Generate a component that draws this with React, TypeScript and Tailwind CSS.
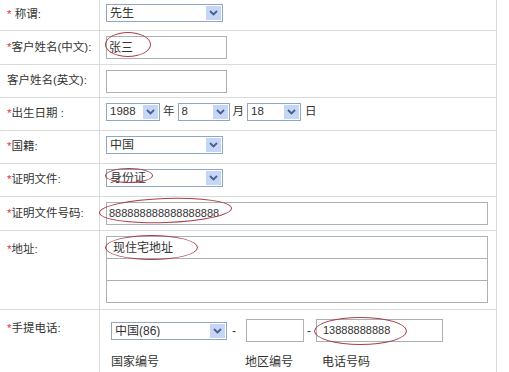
import React from "react";

const font = "font-['Liberation_Sans','Noto_Sans_CJK_SC',sans-serif]";

function Chevron() {
  return (
    <svg width="9" height="6" viewBox="0 0 9 6">
      <path d="M1 1 L4.5 4.5 L8 1" fill="none" stroke="#4a5f8c" strokeWidth="1.8" />
    </svg>
  );
}

function Select({ className, text }: { className: string; text: string }) {
  return (
    <div className={`flex h-[18px] items-center border border-[#8fa7c4] bg-white ${className}`}>
      <span className="flex-1 truncate pl-[3px] leading-none">{text}</span>
      <span className="mr-px flex h-[14px] w-[15px] items-center justify-center bg-[#c6d6f7]">
        <Chevron />
      </span>
    </div>
  );
}

function Input({ className, text }: { className: string; text?: string }) {
  return (
    <div className={`flex h-[23px] items-center border border-[#a9b1b6] bg-white pl-[2px] ${className}`}>
      {text}
    </div>
  );
}

function Label({ star = true, space = false, children }: { star?: boolean; space?: boolean; children: React.ReactNode }) {
  return (
    <span className="whitespace-nowrap text-[11.5px]">
      {star && <span className="text-[#e2333a]">*</span>}
      {space && " "}
      {children}
    </span>
  );
}

function Row({
  h,
  label,
  top,
  children,
  last,
}: {
  h: string;
  label: React.ReactNode;
  top?: boolean;
  children: React.ReactNode;
  last?: boolean;
}) {
  return (
    <div className={`flex ${h} ${last ? "" : "border-b border-[#dadada]"}`}>
      <div
        className={`flex w-[100px] shrink-0 border-r border-[#dadada] pl-[7px] ${
          top ? "items-start pt-[10px]" : "items-center"
        }`}
      >
        {label}
      </div>
      <div className="flex min-w-0 flex-1 flex-col pl-[6px] pt-[5px]">{children}</div>
    </div>
  );
}

function Oval({ className }: { className: string }) {
  return <div className={`pointer-events-none absolute rounded-[50%] border border-[#a8404a] ${className}`} />;
}

export default function App() {
  return (
    <div className={`relative h-[372px] w-[509px] overflow-hidden bg-white text-[12px] text-[#333] ${font}`}>
      <div className="-mt-px w-[497px] border-r border-[#dadada]">
        <Row h="h-[32px]" label={<Label space>称谓:</Label>}>
          <Select className="w-[117px]" text="先生" />
        </Row>
        <Row h="h-[34px]" label={<Label>客户姓名(中文):</Label>}>
          <Input className="w-[121px]" text="张三" />
        </Row>
        <Row h="h-[33px]" label={<Label star={false}>客户姓名(英文):</Label>}>
          <Input className="w-[121px]" />
        </Row>
        <Row h="h-[33px]" label={<Label>出生日期 :</Label>}>
          <div className="flex items-center text-[11.5px]">
            <Select className="w-[54px]" text="1988" />
            <span className="mx-[3px]">年</span>
            <Select className="w-[52px]" text="8" />
            <span className="mx-[3px]">月</span>
            <Select className="w-[54px]" text="18" />
            <span className="ml-[4px]">日</span>
          </div>
        </Row>
        <Row h="h-[33px]" label={<Label>国籍:</Label>}>
          <Select className="w-[117px]" text="中国" />
        </Row>
        <Row h="h-[33px]" label={<Label>证明文件:</Label>}>
          <Select className="w-[117px]" text="身份证" />
        </Row>
        <Row h="h-[34px]" label={<Label>证明文件号码:</Label>}>
          <Input className="w-[382px] text-[11px]" text="888888888888888888" />
        </Row>
        <Row h="h-[79px]" top label={<Label>地址:</Label>}>
          <div className="flex w-[382px] flex-col">
            <Input className="border-[#9aabb5] bg-[#fcfdfe] pl-[6px]" text="现住宅地址" />
            <Input className="-mt-px border-[#9aabb5] bg-[#fcfdfe]" />
            <Input className="-mt-px border-[#9aabb5] bg-[#fcfdfe]" />
          </div>
        </Row>
        <Row h="h-[70px]" top last label={<Label>手提电话:</Label>}>
          <div className="flex items-center pl-[5px] pt-[4px]">
            <Select className="w-[116px]" text="中国(86)" />
            <span className="ml-[5px] mr-[10px]">-</span>
            <Input className="w-[58px]" />
            <span className="ml-[3px] mr-[5px]">-</span>
            <Input className="w-[127px] pl-[6px] text-[11px]" text="13888888888" />
          </div>
          <div className="mt-[11px] flex pl-[5px]">
            <span className="w-[134px]">国家编号</span>
            <span className="w-[77px]">地区编号</span>
            <span>电话号码</span>
          </div>
        </Row>
      </div>

      <Oval className="left-[105px] top-[32px] h-[25px] w-[46px]" />
      <Oval className="left-[105px] top-[168px] h-[15px] w-[48px]" />
      <Oval className="left-[99px] top-[198px] h-[25px] w-[133px] -rotate-2" />
      <Oval className="left-[105px] top-[235px] h-[25px] w-[93px]" />
      <Oval className="left-[314px] top-[317px] h-[28px] w-[93px]" />
    </div>
  );
}
